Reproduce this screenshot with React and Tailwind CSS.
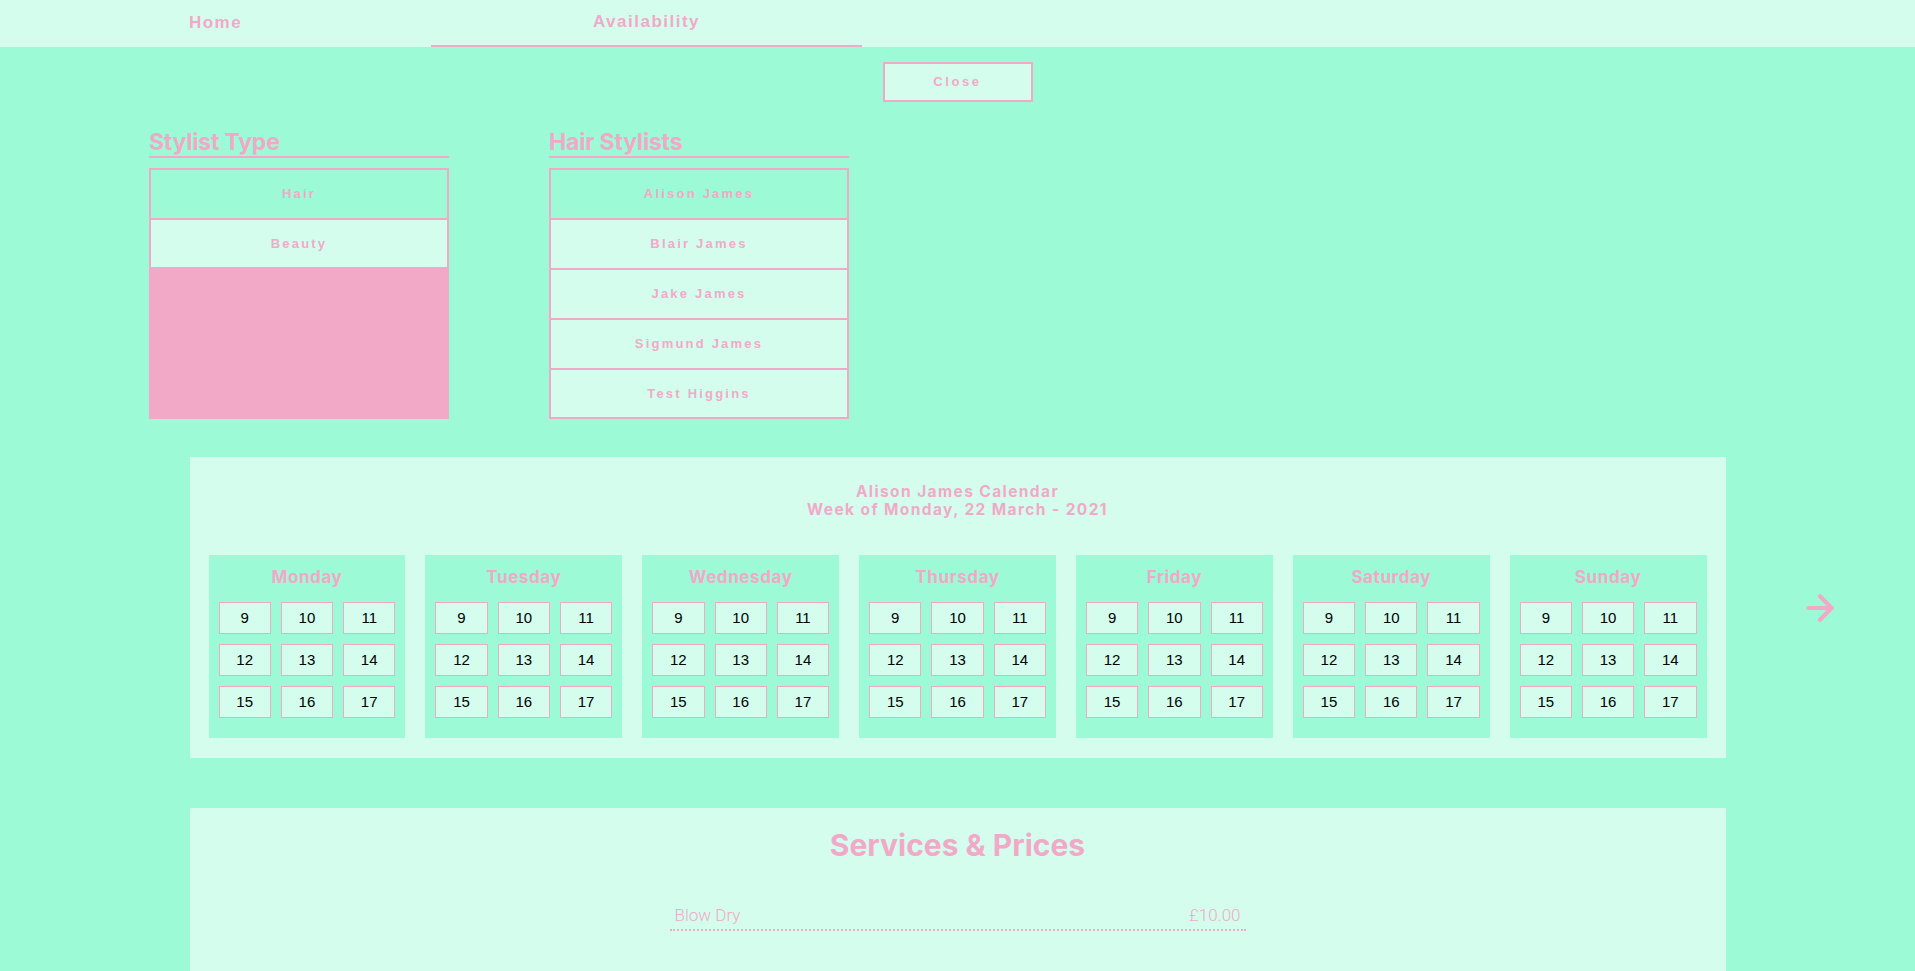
import React from 'react';
import { ArrowRight } from 'lucide-react';

const days = ['Monday', 'Tuesday', 'Wednesday', 'Thursday', 'Friday', 'Saturday', 'Sunday'];
const hours = [9, 10, 11, 12, 13, 14, 15, 16, 17];
const types = ['Hair', 'Beauty'];
const stylists = ['Alison James', 'Blair James', 'Jake James', 'Sigmund James', 'Test Higgins'];

const ListBox = ({ title, items, active }) => (
  <div className="w-[300px] flex flex-col">
    <h2 className="font-['Inter',sans-serif] font-bold text-[23px] leading-[28px] tracking-[-0.2px] text-[#f2a9c8] border-b-2 border-[#f2a9c8] pt-[1px]">
      {title}
    </h2>
    <div className="mt-[10px] h-[251px] border-2 border-[#f2a9c8] bg-[#f2a9c8] flex flex-col">
      {items.map((item, i) => (
        <button
          key={item}
          className={`shrink-0 flex items-center justify-center font-['Liberation_Sans',sans-serif] font-bold text-[13px] tracking-[0.17em] text-[#f2a9c8] ${
            i === active ? 'bg-[#9cfad6]' : 'bg-[#d4fdee]'
          } ${i < items.length - 1 ? 'h-[50px] border-b-2 border-[#f2a9c8]' : 'h-[47px]'}`}
        >
          {item}
        </button>
      ))}
    </div>
  </div>
);

const DayCard = ({ day }) => (
  <div className="flex-1 bg-[#9cfad6] px-[10px] pt-[10px] pb-[20px] flex flex-col">
    <h3 className="text-center font-['Inter',sans-serif] font-bold text-[17px] leading-[24px] tracking-[0.6px] text-[#f2a9c8]">
      {day}
    </h3>
    <div className="mt-[13px] grid grid-cols-3 gap-x-[10px] gap-y-[10px]">
      {hours.map((h) => (
        <button
          key={h}
          className="h-[32px] bg-[#d4fdee] border border-[#f2a9c8] font-['Liberation_Sans',sans-serif] text-[15px] text-black flex items-center justify-center"
        >
          {h}
        </button>
      ))}
    </div>
  </div>
);

export default function App() {
  return (
    <div className="min-h-screen bg-[#9cfad6] font-['Inter',sans-serif]">
      {/* Nav */}
      <nav className="h-[47px] bg-[#d4fdee] flex">
        <a className="w-[431px] h-full flex justify-center pt-[10px] font-['Liberation_Sans',sans-serif] font-bold text-[17px] tracking-[1.5px] text-[#f2a9c8]">
          Home
        </a>
        <a className="w-[431px] h-full flex justify-center pt-[9px] border-b-2 border-[#f2a9c8] font-['Liberation_Sans',sans-serif] font-bold text-[17px] tracking-[1.5px] text-[#f2a9c8]">
          Availability
        </a>
      </nav>

      {/* Close */}
      <div className="flex justify-center pt-[15px]">
        <button className="w-[150px] h-[40px] border-2 border-[#f2a9c8] bg-[#d4fdee] font-['Liberation_Sans',sans-serif] font-bold text-[13px] tracking-[0.2em] text-[#f2a9c8]">
          Close
        </button>
      </div>

      {/* Selectors */}
      <div className="flex gap-[100px] pl-[149px] pt-[25px]">
        <ListBox title="Stylist Type" items={types} active={0} />
        <ListBox title="Hair Stylists" items={stylists} active={0} />
      </div>

      {/* Calendar */}
      <div className="mt-[38px] grid grid-cols-[1fr_1536px_1fr] items-center">
        <div />
        <section className="bg-[#d4fdee] px-[19px] pt-[26px] pb-[20px]">
          <div className="text-center font-bold text-[15.5px] leading-[18px] tracking-[0.09em] text-[#f2a9c8]">
            <p>Alison James Calendar</p>
            <p>Week of Monday, 22 March - 2021</p>
          </div>
          <div className="mt-[36px] flex gap-[20px]">
            {days.map((d) => (
              <DayCard key={d} day={d} />
            ))}
          </div>
        </section>
        <div className="flex justify-center">
          <ArrowRight size={40} strokeWidth={2.5} className="text-[#f2a9c8]" />
        </div>
      </div>

      {/* Services */}
      <section className="mt-[50px] mx-auto w-[1536px] bg-[#d4fdee] pt-[17px] pb-[60px]">
        <h2 className="text-center font-bold text-[30px] leading-[40px] text-[#f2a9c8]">Services &amp; Prices</h2>
        <div className="mx-auto mt-[38px] w-[576px] flex justify-between px-[5px] border-b-2 border-dotted border-[#f2a9c8] font-['Roboto',sans-serif] font-light text-[17px] text-[#f2a9c8]">
          <span>Blow Dry</span>
          <span>£10.00</span>
        </div>
      </section>
    </div>
  );
}
